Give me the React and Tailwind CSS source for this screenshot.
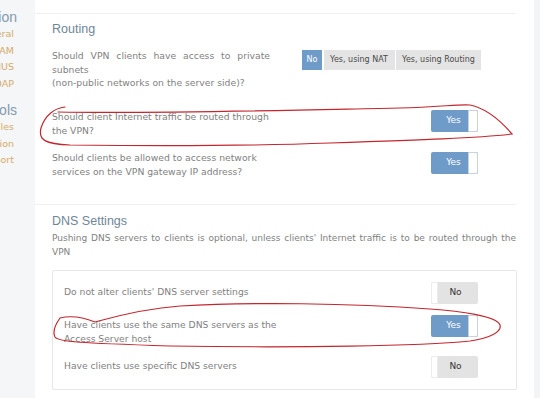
import React from "react";

const body = { fontFamily: '"DejaVu Sans", Verdana, sans-serif' };
const head = { fontFamily: '"Liberation Sans", Arial, sans-serif' };

function Toggle({ on }) {
  return on ? (
    <div className="relative w-[47px] h-[22px] rounded-[2px] bg-[#6f9bc9] flex items-center justify-center text-[9px] text-white shrink-0" style={body}>
      <span className="mr-[2px]">Yes</span>
      <div className="absolute right-0 top-0 h-full w-[10px] bg-white border border-[#c9d3dc] rounded-r-[2px]" />
    </div>
  ) : (
    <div className="relative w-[47px] h-[22px] rounded-[2px] bg-[#e3e3e3] flex items-center justify-center text-[9px] text-[#333] shrink-0" style={body}>
      <span className="ml-[2px]">No</span>
      <div className="absolute left-0 top-0 h-full w-[7px] bg-white border border-[#ececec] rounded-l-[2px]" />
    </div>
  );
}

function SideItem({ children }) {
  return <div className="h-[16.5px] leading-[16.5px] pr-[21px] text-[9.5px] text-[#d6ab69] whitespace-nowrap" style={body}>{children}</div>;
}
function SideHead({ children, className }) {
  return <div className={"h-[18px] leading-[18px] pr-[18px] text-[14px] text-[#8599ab] whitespace-nowrap " + className} style={head}>{children}</div>;
}

export default function App() {
  return (
    <div className="relative w-[540px] h-[398px] overflow-hidden flex bg-white">
      <div className="w-[35px] shrink-0 bg-[#f5f6f7] overflow-hidden flex flex-col items-end">
        <SideHead className="mt-[8px]">Authentication</SideHead>
        <SideItem>General</SideItem>
        <SideItem>PAM</SideItem>
        <SideItem>RADIUS</SideItem>
        <SideItem>LDAP</SideItem>
        <SideHead className="mt-[9px]">Tools</SideHead>
        <SideItem>Profiles</SideItem>
        <SideItem>Validation</SideItem>
        <SideItem>Support</SideItem>
      </div>

      <div className="w-[499px] shrink-0 pr-[18px] text-[#818181]" style={body}>
        <div className="mt-[13px] h-px bg-[#f0f0f0]" />
        <div className="pl-[17px]">
          <div className="mt-[7px] h-[16px] leading-[16px] text-[12.5px] text-[#6f8697]" style={head}>Routing</div>

          <div className="mt-[12px] flex items-start">
            <div className="w-[218px] text-[9.25px] leading-[13.5px] text-justify">
              Should VPN clients have access to private subnets<br />(non-public networks on the server side)?
            </div>
            <div className="ml-[32px] flex gap-[1.5px] mt-[1px] text-[8px]">
              <div className="h-[20px] w-[20px] bg-[#6f9bc9] text-white flex items-center justify-center">No</div>
              <div className="h-[20px] w-[71px] bg-[#e4e4e4] text-[#4a4a4a] flex items-center justify-center">Yes, using NAT</div>
              <div className="h-[20px] w-[85px] bg-[#e4e4e4] text-[#4a4a4a] flex items-center justify-center">Yes, using Routing</div>
            </div>
          </div>

          <div className="mt-[20.5px] flex items-start">
            <div className="w-[222px] text-[9.25px] leading-[13.5px]">
              Should client Internet traffic be routed through the VPN?
            </div>
            <div className="ml-[157px]"><Toggle on /></div>
          </div>

          <div className="mt-[14px] flex items-start">
            <div className="w-[222px] text-[9.25px] leading-[13.5px]">
              Should clients be allowed to access network services on the VPN gateway IP address?
            </div>
            <div className="ml-[157px] mt-[1px]"><Toggle on /></div>
          </div>
        </div>

        <div className="mt-[26px] h-px bg-[#f0f0f0]" />
        <div className="pl-[17px]">
          <div className="mt-[8px] h-[16px] leading-[16px] text-[12.5px] text-[#6f8697]" style={head}>DNS Settings</div>
          <div className="mt-[2px] text-[9px] leading-[14px] text-justify">
            Pushing DNS servers to clients is optional, unless clients' Internet traffic is to be routed through the VPN
          </div>
          <div className="mt-[11px] w-[465px] border border-[#e8e8e8] rounded-[2px] pt-[11px] pb-[11px] pl-[11px] pr-[38px]">
            <div className="flex items-start justify-between">
              <div className="w-[225px] pt-[3px] text-[9.2px] leading-[13.5px]">Do not alter clients' DNS server settings</div>
              <Toggle />
            </div>
            <div className="mt-[11px] flex items-start justify-between">
              <div className="w-[225px] pt-[3px] text-[9.2px] leading-[14px]">Have clients use the same DNS servers as the Access Server host</div>
              <Toggle on />
            </div>
            <div className="mt-[10px] flex items-start justify-between">
              <div className="w-[225px] pt-[3px] text-[9.2px] leading-[13.5px]">Have clients use specific DNS servers</div>
              <Toggle />
            </div>
          </div>
        </div>
      </div>

      <div className="flex-1 bg-[#f3f4f5]" />

      <svg className="absolute inset-0 pointer-events-none" width="540" height="398" viewBox="0 0 540 398" fill="none">
        <path d="M65 107 C55 108 45 115 41 128 C38 140 45 144 70 145 C150 146 250 146 330 143 C420 140 480 138 512 134 C500 120 485 108 470 105 C460 104 440 107 400 108 C300 110 150 114 58 112" stroke="#c4262e" strokeWidth="1.2" strokeLinecap="round" />
        <path d="M60 318 C55 325 52 331 55 337 C58 342 80 343 170 346 C300 348 420 346 470 341 C490 338 502 332 500 325 C497 316 460 311 430 309 C350 303 250 302 180 306 C140 309 110 318 95 322 C85 318 72 315 60 318" stroke="#c4262e" strokeWidth="1.2" strokeLinecap="round" />
      </svg>
    </div>
  );
}
